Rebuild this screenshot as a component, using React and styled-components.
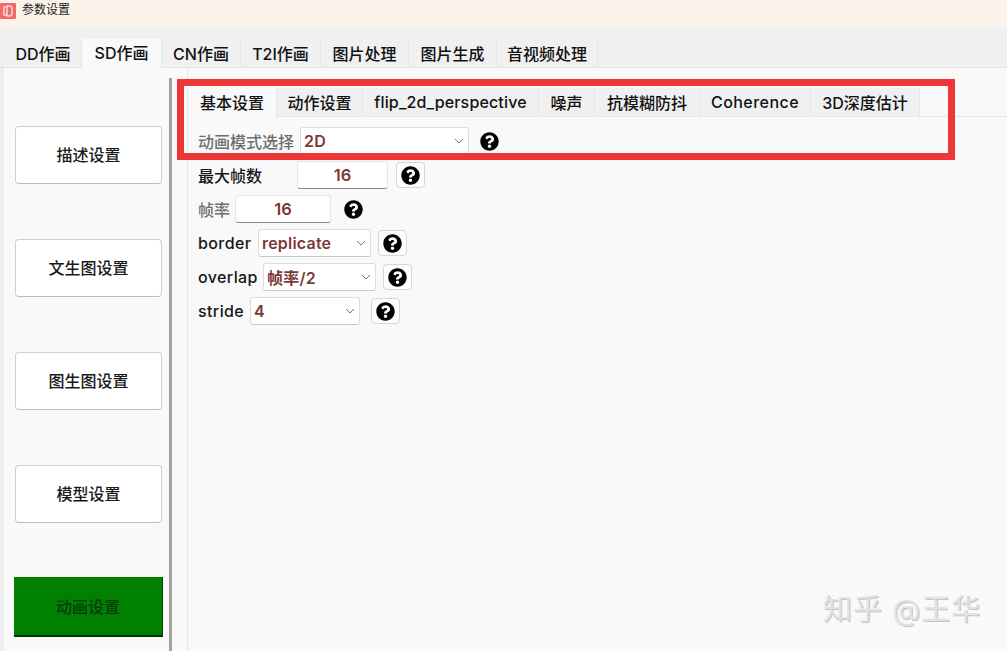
import React from "react";
import styled, { createGlobalStyle } from "styled-components";
import { FaQuestionCircle } from "react-icons/fa";

const FONT = `Inter, "Noto Sans CJK SC", sans-serif`;

const Global = createGlobalStyle`
  html, body { margin: 0; padding: 0; background: #f9f9f9; }
  body { font-family: ${FONT}; overflow: hidden; }
  * { box-sizing: border-box; }
`;

const Page = styled.div`
  width: 1007px;
  height: 651px;
  position: relative;
  overflow: hidden;
  display: flex;
  flex-direction: column;
  background: #f0f0f0;
`;

const TitleBar = styled.div`
  height: 27px;
  flex: none;
  display: flex;
  align-items: flex-start;
  gap: 6px;
  padding-top: 2px;
  background: #fbf3ea;
  font-size: 12px;
  line-height: 16px;
  color: #222;
`;

const TitleIcon = styled.svg`
  width: 16px;
  height: 16px;
  margin-top: 1px;
  flex: none;
`;

const MainTabs = styled.div`
  height: 41px;
  flex: none;
  display: flex;
  align-items: flex-end;
  padding-left: 5px;
  border-bottom: 1px solid #e4e4e4;
`;

const MainTab = styled.div`
  width: ${(p) => p.$w}px;
  height: ${(p) => (p.$active ? 29 : 26)}px;
  margin-bottom: ${(p) => (p.$active ? -1 : 0)}px;
  padding-bottom: ${(p) => (p.$active ? 3 : 2)}px;
  display: flex;
  align-items: center;
  justify-content: center;
  font-size: 16px;
  font-weight: 500;
  color: #111;
  background: ${(p) => (p.$active ? "#f9f9f9" : "#f0f0f0")};
  border-right: 1px solid #e6e6e6;
  position: relative;
`;

const Body = styled.div`
  flex: 1;
  display: flex;
  background: #f9f9f9;
  border-left: 3px solid #ececec;
  margin-left: 1px;
`;

const Sidebar = styled.div`
  width: 165px;
  flex: none;
  padding: 58px 0 0 11px;
  display: flex;
  flex-direction: column;
  gap: 55px;
`;

const SideButton = styled.div`
  width: 147px;
  height: 58px;
  display: flex;
  align-items: center;
  justify-content: center;
  padding-bottom: 3px;
  background: #fff;
  border: 1px solid #cfcfcf;
  border-bottom-color: #bdbdbd;
  border-radius: 4px;
  font-size: 16px;
  font-weight: 500;
  color: #1a1a1a;
`;

const GreenButton = styled(SideButton)`
  width: 149px;
  height: 60px;
  margin: -1px 0 0 -1px;
  padding-bottom: 1px;
  background: #008000;
  border: none;
  border-right: 1px solid #004400;
  border-bottom: 2px solid #003300;
  border-radius: 0;
  color: #0b3d0b;
`;

const Splitter = styled.div`
  width: 3px;
  flex: none;
  margin: 10px 0 0 0;
  background: #a3a3a3;
`;

const Panel = styled.div`
  flex: 1;
  margin-left: 15px;
  border-left: 1px solid #e8e8e8;
  padding-top: 20px;
  display: flex;
  flex-direction: column;
`;

const SubTabs = styled.div`
  height: 29px;
  flex: none;
  display: flex;
  align-items: flex-end;
  border-bottom: 1px solid #e6e6e6;
`;

const SubTab = styled.div`
  width: ${(p) => p.$w}px;
  height: ${(p) => (p.$active ? 30 : 28)}px;
  margin-bottom: ${(p) => (p.$active ? -1 : 0)}px;
  display: flex;
  align-items: center;
  justify-content: center;
  font-size: 16px;
  font-weight: 500;
  letter-spacing: ${(p) => p.$spacing || 0}px;
  color: #111;
  white-space: nowrap;
  background: ${(p) => (p.$active ? "#f9f9f9" : "#f0f0f0")};
  border-right: 1px solid #e6e6e6;
`;

const Form = styled.div`
  padding: 7px 0 0 10px;
  display: flex;
  flex-direction: column;
`;

const Row = styled.div`
  height: 34px;
  display: flex;
  align-items: center;
`;

const Label = styled.span`
  width: ${(p) => p.$w}px;
  flex: none;
  font-size: 16px;
  font-weight: 500;
  letter-spacing: ${(p) => (p.$latin ? "0.4px" : "0")};
  white-space: nowrap;
  color: ${(p) => (p.$muted ? "#6e6e6e" : "#161616")};
`;

const Select = styled.div`
  width: ${(p) => p.$w}px;
  height: 28px;
  flex: none;
  display: flex;
  align-items: center;
  justify-content: space-between;
  padding: 0 4px 0 3px;
  background: #fff;
  border: 1px solid #dcdcdc;
  border-bottom-color: #c8c8c8;
  border-radius: 3px;
  font-size: 16px;
  font-weight: 600;
  letter-spacing: 0.2px;
  color: #7b3a3a;
`;

const NumberBox = styled.div`
  width: ${(p) => p.$w}px;
  height: 28px;
  flex: none;
  display: flex;
  align-items: center;
  justify-content: center;
  background: #fff;
  border: 1px solid #e6e6e6;
  border-bottom: 1px solid #8a8a8a;
  border-radius: 3px;
  font-size: 16.5px;
  font-weight: 600;
  color: #7b3a3a;
`;

const HelpButton = styled.div`
  width: 29px;
  height: 26px;
  flex: none;
  margin-left: ${(p) => p.$left}px;
  display: flex;
  align-items: center;
  justify-content: center;
  color: #000;
  background: ${(p) => (p.$flat ? "transparent" : "#fdfdfd")};
  border: 1px solid ${(p) => (p.$flat ? "transparent" : "#d6d6d6")};
  border-radius: 4px;
`;

const Highlight = styled.div`
  position: absolute;
  left: 177px;
  top: 79px;
  width: 778px;
  height: 81px;
  border: 7px solid #ee3636;
  pointer-events: none;
`;

const Watermark = styled.div`
  position: absolute;
  left: 823px;
  top: 590px;
  font-size: 29px;
  line-height: 40px;
  letter-spacing: 1px;
  white-space: nowrap;
  color: #e2e2e2;
  text-shadow: 1px 1px 0 #c4c4c4;
`;

const Chevron = () => (
  <svg width="10" height="6" viewBox="0 0 10 6" fill="none" stroke="#777" strokeWidth="1">
    <path d="M1 1l4 4 4-4" />
  </svg>
);

const Help = ({ left, flat }) => (
  <HelpButton $left={left} $flat={flat}>
    <FaQuestionCircle size={19} />
  </HelpButton>
);

const mainTabs = [
  ["DD作画", 77],
  ["SD作画", 80],
  ["CN作画", 79],
  ["T2I作画", 80],
  ["图片处理", 88],
  ["图片生成", 88],
  ["音视频处理", 101],
];

const subTabs = [
  ["基本设置", 89],
  ["动作设置", 86],
  ["flip_2d_perspective", 176, 0.15],
  ["噪声", 56],
  ["抗模糊防抖", 105],
  ["Coherence", 111, 0.45],
  ["3D深度估计", 109],
];

const sideItems = ["描述设置", "文生图设置", "图生图设置", "模型设置"];

export default function App() {
  return (
    <Page>
      <Global />
      <TitleBar>
        <TitleIcon viewBox="0 0 16 16">
          <rect width="16" height="16" rx="1" fill="#f26a6a" />
          <path d="M4 4h3v8H4zM7 3h2.5a2.5 2.5 0 0 1 2.5 2.5v5A2.5 2.5 0 0 1 9.5 13H7z" fill="none" stroke="#fff" strokeWidth="1.1" />
        </TitleIcon>
        参数设置
      </TitleBar>
      <MainTabs>
        {mainTabs.map(([name, w]) => (
          <MainTab key={name} $w={w} $active={name === "SD作画"}>
            {name}
          </MainTab>
        ))}
      </MainTabs>
      <Body>
        <Sidebar>
          {sideItems.map((item) => (
            <SideButton key={item}>{item}</SideButton>
          ))}
          <GreenButton>动画设置</GreenButton>
        </Sidebar>
        <Splitter />
        <Panel>
          <SubTabs>
            {subTabs.map(([name, w, spacing]) => (
              <SubTab key={name} $w={w} $spacing={spacing} $active={name === "基本设置"}>
                {name}
              </SubTab>
            ))}
          </SubTabs>
          <Form>
            <Row>
              <Label $muted $w={102}>动画模式选择</Label>
              <Select $w={169}>2D<Chevron /></Select>
              <Help left={6} flat />
            </Row>
            <Row>
              <Label $w={99}>最大帧数</Label>
              <NumberBox $w={91}>16</NumberBox>
              <Help left={8} />
            </Row>
            <Row>
              <Label $muted $w={37}>帧率</Label>
              <NumberBox $w={96}>16</NumberBox>
              <Help left={8} flat />
            </Row>
            <Row>
              <Label $latin $w={60}>border</Label>
              <Select $w={113}>replicate<Chevron /></Select>
              <Help left={7} />
            </Row>
            <Row>
              <Label $latin $w={65}>overlap</Label>
              <Select $w={113}>帧率/2<Chevron /></Select>
              <Help left={7} />
            </Row>
            <Row>
              <Label $latin $w={52}>stride</Label>
              <Select $w={110}>4<Chevron /></Select>
              <Help left={11} />
            </Row>
          </Form>
        </Panel>
      </Body>
      <Highlight />
      <Watermark>知乎 @王华</Watermark>
    </Page>
  );
}
